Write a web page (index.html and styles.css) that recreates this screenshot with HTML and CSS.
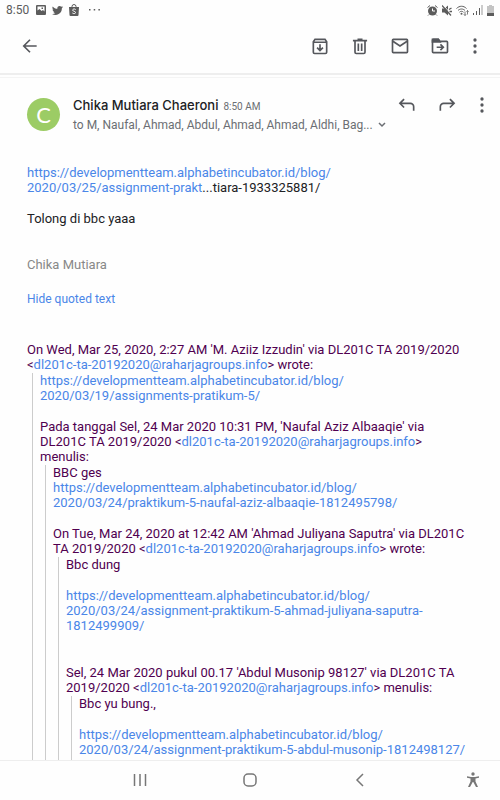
FILE: index.html
```html
<!DOCTYPE html>
<html lang="id">
   <head>
      <meta charset="utf-8">
      <meta name="viewport" content="width=device-width, initial-scale=1">
      <title>Mail</title>
      <link rel="stylesheet" href="styles.css">
   </head>
   <body>
      <div class="status">
         <span class="clock">8:50</span>
         <svg width="10" height="10" viewBox="0 0 10 10"><path fill-rule="evenodd" d="M1 0h8a1 1 0 0 1 1 1v8a1 1 0 0 1-1 1H1a1 1 0 0 1-1-1V1a1 1 0 0 1 1-1zM1.500 1.500v4l2-1.500 2 2 1.500-1 1.500 1.500v-5zM5.500 2.500H7V4H5.500z"/></svg>
         <svg width="11" height="11" viewBox="0 0 24 24"><path d="M24 4.6a10 10 0 0 1-2.8.8 5 5 0 0 0 2.1-2.7c-1 .6-2 1-3.100 1.200a4.900 4.900 0 0 0-8.400 4.500C7.700 8.200 4.100 6.200 1.700 3.100a4.900 4.900 0 0 0 1.500 6.600c-.8 0-1.600-.2-2.200-.6a4.900 4.900 0 0 0 3.900 4.900c-.7.200-1.500.2-2.200.1a4.900 4.900 0 0 0 4.600 3.400A9.900 9.900 0 0 1 0 19.500a14 14 0 0 0 21.500-12.400A10 10 0 0 0 24 4.600z"/></svg>
         <svg width="10" height="12" viewBox="0 0 10 12"><path d="M0 3h10l-.5 8a1 1 0 0 1-1 1h-7a1 1 0 0 1-1-1z"/><path d="M3 4V2.500a2 2 0 0 1 4 0V4" fill="none" stroke="#5c5c5c"/><path d="M6.700 5.500C5.500 4.500 3.500 5 3.700 6.300c.3 1.200 2.800.8 2.800 2.200 0 1.300-2 1.400-3.100.5" fill="none" stroke="#fff"/></svg>
         <svg class="dots" width="11" height="2" viewBox="0 0 11 2"><path d="M0 0h1.500v1.500H0zM4.700 0h1.500v1.500H4.700zM9.400 0h1.500v1.500H9.400z"/></svg>
         <div class="status-right">
            <svg width="11" height="11" viewBox="0 0 11 11"><circle cx="5.500" cy="6" r="4.500"/><path d="M.5 2.500 3 .5M10.500 2.500 8 .5M2 9.500l-1 1M9 9.500l1 1" stroke="#5c5c5c" fill="none"/><path d="M5.500 3.500V6H8" fill="none" stroke="#fff"/></svg>
            <svg width="10" height="11" viewBox="0 0 10 11"><path d="M0 3.500h2.500L6 .5v10L2.500 7.500H0z"/><path d="M1 0l9 10" stroke="#fff"/><path d="M0 .5l9 10M7 4.500 9.500 3M7.500 6.500H10" stroke="#5c5c5c" stroke-width="1.300" fill="none"/></svg>
            <svg width="13" height="11" viewBox="0 0 13 11"><path d="M.5 3.500c3-3 7-3 10 0M2 5.500c2-2 5-2 7 0M3.500 7.200c1.200-1.200 2.800-1.200 4 0" fill="none" stroke="#5c5c5c"/><circle cx="5.500" cy="8.800" r="1"/><path d="M9 10.500V6.500M7.800 9.300 9 10.500l1-1.200M11.500 9.500v-4M10.500 6.700l1-1.200 1.200 1.200" fill="none" stroke="#5c5c5c" stroke-width=".8"/></svg>
            <svg width="10" height="10" viewBox="0 0 10 10"><path d="M0 8h1v2H0zM3 6h1v4H3zM6 3h1v7H6z"/><path d="M8.500 0h1v10h-1z" fill="#999"/></svg>
            <svg width="7" height="11" viewBox="0 0 7 11"><path d="M2 0h3v1h2v7H0V1h2z" fill="#c4c4c4"/><path d="M0 8h7v3H0z"/></svg>
         </div>
      </div>
      <header class="toolbar">
         <button class="icon back" aria-label="Kembali"><svg viewBox="0 0 24 24"><path d="M20 12H5M12 4.500 4.500 12l7.500 7.500"/></svg></button>
         <button class="icon" aria-label="Arsipkan"><svg viewBox="0 0 24 24"><path d="M4 7v12.500a1.500 1.500 0 0 0 1.500 1.500h13a1.500 1.500 0 0 0 1.500-1.500V7l-2-3H6L4 7zM4 7.500h16M12 10v7M8.500 14l3.500 3.500 3.500-3.500"/></svg></button>
         <button class="icon" aria-label="Hapus"><svg viewBox="0 0 24 24"><path d="M3.500 5.500h17M9 4h6M6 6v13.500A1.500 1.500 0 0 0 7.500 21h9a1.500 1.500 0 0 0 1.500-1.500V6M10 9v9M14 9v9"/></svg></button>
         <button class="icon" aria-label="Tandai belum dibaca"><svg viewBox="0 0 24 24"><rect x="3" y="4" width="18" height="16" rx="1"/><path d="M3 6l9 6 9-6"/></svg></button>
         <button class="icon" aria-label="Pindahkan"><svg viewBox="0 0 24 24"><path d="M3 5v14a1 1 0 0 0 1 1h16a1 1 0 0 0 1-1V7.500a1 1 0 0 0-1-1h-8L10 4H4a1 1 0 0 0-1 1zM8 13.500h8M12.500 10l3.500 3.500-3.500 3.500"/><path d="M3 4h7l2 3H3z" fill="#55575c"/></svg></button>
         <button class="icon more" aria-label="Opsi lainnya"><svg viewBox="0 0 24 24"><circle cx="12" cy="3" r="2.500"/><circle cx="12" cy="12" r="2.500"/><circle cx="12" cy="21" r="2.500"/></svg></button>
      </header>
      <main class="mail">
         <div class="sender">
            <span class="avatar">C</span>
            <div class="who">
               <div class="name-line"><h1>Chika Mutiara Chaeroni</h1><time>8:50 AM</time></div>
               <button class="recipients"><span>to M, Naufal, Ahmad, Abdul, Ahmad, Ahmad, Aldhi, Bag...</span><svg width="8" height="6" viewBox="0 0 8 6"><path d="M1 1l3 3 3-3"/></svg></button>
            </div>
            <button class="icon" aria-label="Balas"><svg viewBox="0 0 24 24"><path d="M8.500 5 3.500 10l5 5M4 10h12a4 4 0 0 1 4 4v5"/></svg></button>
            <button class="icon" aria-label="Teruskan"><svg viewBox="0 0 24 24"><path d="M15.500 5l5 5-5 5M20 10H8a4 4 0 0 0-4 4v5"/></svg></button>
            <button class="icon more" aria-label="Opsi pesan"><svg viewBox="0 0 24 24"><circle cx="12" cy="3" r="2.500"/><circle cx="12" cy="12" r="2.500"/><circle cx="12" cy="21" r="2.500"/></svg></button>
         </div>
         <article class="message">
            <p><a href="#">https://developmentteam.alphabetincubator.id/blog/<br>2020/03/25/assignment-prakt</a>...tiara-1933325881/</p>
            <p>Tolong di bbc yaaa</p>
            <p class="signature">Chika Mutiara</p>
            <button class="toggle">Hide quoted text</button>
            <div class="quoted">
               <p>On Wed, Mar 25, 2020, 2:27 AM 'M. Aziiz Izzudin' via DL201C TA 2019/2020<br>&lt;<a href="#">dl201c-ta-20192020@raharjagroups.info</a>&gt; wrote:</p>
               <blockquote>
                  <p><a href="#">https://developmentteam.alphabetincubator.id/blog/<br>2020/03/19/assignments-pratikum-5/</a></p>
                  <p>Pada tanggal Sel, 24 Mar 2020 10:31 PM, 'Naufal Aziz Albaaqie' via<br>DL201C TA 2019/2020 &lt;<a href="#">dl201c-ta-20192020@raharjagroups.info</a>&gt;<br>menulis:</p>
                  <blockquote>
                     <p>BBC ges<br><a href="#">https://developmentteam.alphabetincubator.id/blog/<br>2020/03/24/praktikum-5-naufal-aziz-albaaqie-1812495798/</a></p>
                     <p>On Tue, Mar 24, 2020 at 12:42 AM 'Ahmad Juliyana Saputra' via DL201C<br>TA 2019/2020 &lt;<a href="#">dl201c-ta-20192020@raharjagroups.info</a>&gt; wrote:</p>
                     <blockquote>
                        <p>Bbc dung</p>
                        <p><a href="#">https://developmentteam.alphabetincubator.id/blog/<br>2020/03/24/assignment-praktikum-5-ahmad-juliyana-saputra-<br>1812499909/</a></p>
                        <p class="reply">Sel, 24 Mar 2020 pukul 00.17 'Abdul Musonip 98127' via DL201C TA<br>2019/2020 &lt;<a href="#">dl201c-ta-20192020@raharjagroups.info</a>&gt; menulis:</p>
                        <blockquote class="last">
                           <p>Bbc yu bung.,</p>
                           <p><a href="#">https://developmentteam.alphabetincubator.id/blog/<br>2020/03/24/assignment-praktikum-5-abdul-musonip-1812498127/</a></p>
                        </blockquote>
                     </blockquote>
                  </blockquote>
               </blockquote>
            </div>
         </article>
      </main>
      <nav class="navbar">
         <button aria-label="Aplikasi terbaru"><svg viewBox="0 0 16 16"><path d="M2.500 2v12M8 2v12M13.500 2v12"/></svg></button>
         <button aria-label="Beranda"><svg viewBox="0 0 16 16"><rect x="2" y="2" width="12" height="12" rx="4"/></svg></button>
         <button aria-label="Kembali"><svg viewBox="0 0 16 16"><path d="M11 2 5 8l6 6"/></svg></button>
         <button class="access" aria-label="Aksesibilitas"><svg viewBox="0 0 16 16"><circle cx="8" cy="2" r="1.700"/><path d="M2 4.300l4 .7h4l4-.7v1.500l-3.500.7v3L13 15h-2l-2.700-5h-.6L5 15H3l2.500-5.500v-3L2 5.800z"/></svg></button>
      </nav>
   </body>
</html>
```
FILE: styles.css
```css
* {
   box-sizing: border-box;
}
body {
   display: flex;
   flex-direction: column;
   height: 100vh;
   margin: 0;
   background-color: #fefefe;
   color: #202124;
   font: 13px/15px Roboto, sans-serif;
}
p, h1, blockquote {
   margin: 0;
}
a {
   color: #4a86e8;
   text-decoration: none;
}
button {
   padding: 0;
   border: 0;
   background: none;
   color: inherit;
   font: inherit;
}
svg {
   display: block;
   flex: none;
}
.status {
   display: flex;
   align-items: center;
   gap: 6px;
   height: 20px;
   padding: 0 6px;
   color: #5c5c5c;
   fill: #5c5c5c;
}
.clock {
   margin-right: 1px;
   font-size: 12px;
}
.dots {
   margin-left: 4px;
}
.status-right {
   display: flex;
   align-items: center;
   gap: 4px;
   margin-left: auto;
}
.toolbar {
   display: flex;
   align-items: center;
   gap: 20px;
   height: 58px;
   padding: 0 15px 5px 20px;
   border-bottom: 1px solid #f4f4f4;
   box-shadow: inset 0 -2px #fefefe, inset 0 -4px #eee;
}
.back {
   margin-right: auto;
}
.icon {
   flex: none;
   width: 20px;
}
.icon svg {
   width: 20px;
   height: 20px;
   fill: none;
   stroke: #55575c;
   stroke-width: 2;
}
.icon.more {
   margin-left: -5px;
}
.icon.more svg {
   height: 16px;
   fill: #55575c;
   stroke: none;
}
.sender .more svg {
   margin-top: 2px;
}
.mail {
   flex: 1;
   min-height: 0;
   overflow-y: auto;
   scrollbar-width: none;
}
.sender {
   display: flex;
   align-items: flex-start;
   gap: 20px;
   padding: 17px 8px 0 27px;
}
.avatar {
   flex: none;
   width: 33px;
   height: 33px;
   margin: 3px -7px 0 0;
   border-radius: 50%;
   background-color: #9ccc65;
   color: #fff;
   font: 22px/33px Lato, sans-serif;
   text-align: center;
}
.who {
   flex: 1;
   min-width: 0;
}
.name-line {
   display: flex;
   align-items: baseline;
   gap: 5px;
   height: 20px;
   line-height: 20px;
}
h1 {
   font: 500 13px/20px Inter, sans-serif;
}
time {
   color: #6b6e73;
   font-size: 10px;
}
.recipients {
   display: flex;
   align-items: center;
   gap: 5px;
   height: 20px;
   color: #6b6e73;
   font-size: 12px;
   white-space: nowrap;
}
.recipients svg {
   fill: none;
   stroke: #6b6e73;
   stroke-width: 1.5;
}
.message {
   padding: 30px 20px 0 27px;
}
.message p + p {
   margin-top: 16px;
}
.message .signature {
   margin-top: 31px;
   color: #888;
}
.toggle {
   display: block;
   margin-top: 20px;
   color: #4a86e8;
   font-size: 12px;
}
.quoted {
   margin-top: 35px;
   color: #500050;
   white-space: nowrap;
}
blockquote {
   margin: 1px 0 0 5px;
   padding-left: 7px;
   border-left: 1px solid #ccc;
}
.message .reply {
   margin-top: 32px;
}
.last {
   padding-bottom: 16px;
}
.navbar {
   display: grid;
   grid-template-columns: 17% 22% 22% 22% 1fr;
   height: 40px;
   padding-bottom: 2px;
   border-top: 1px solid #eee;
}
.navbar button {
   display: grid;
   place-items: center;
}
.navbar button:first-child {
   grid-column: 2;
}
.navbar svg {
   width: 16px;
   height: 16px;
   fill: none;
   stroke: #777;
   stroke-width: 1.5;
}
.navbar .access {
   padding-left: 31px;
}
.navbar .access svg {
   fill: #777;
   stroke: none;
}
```
